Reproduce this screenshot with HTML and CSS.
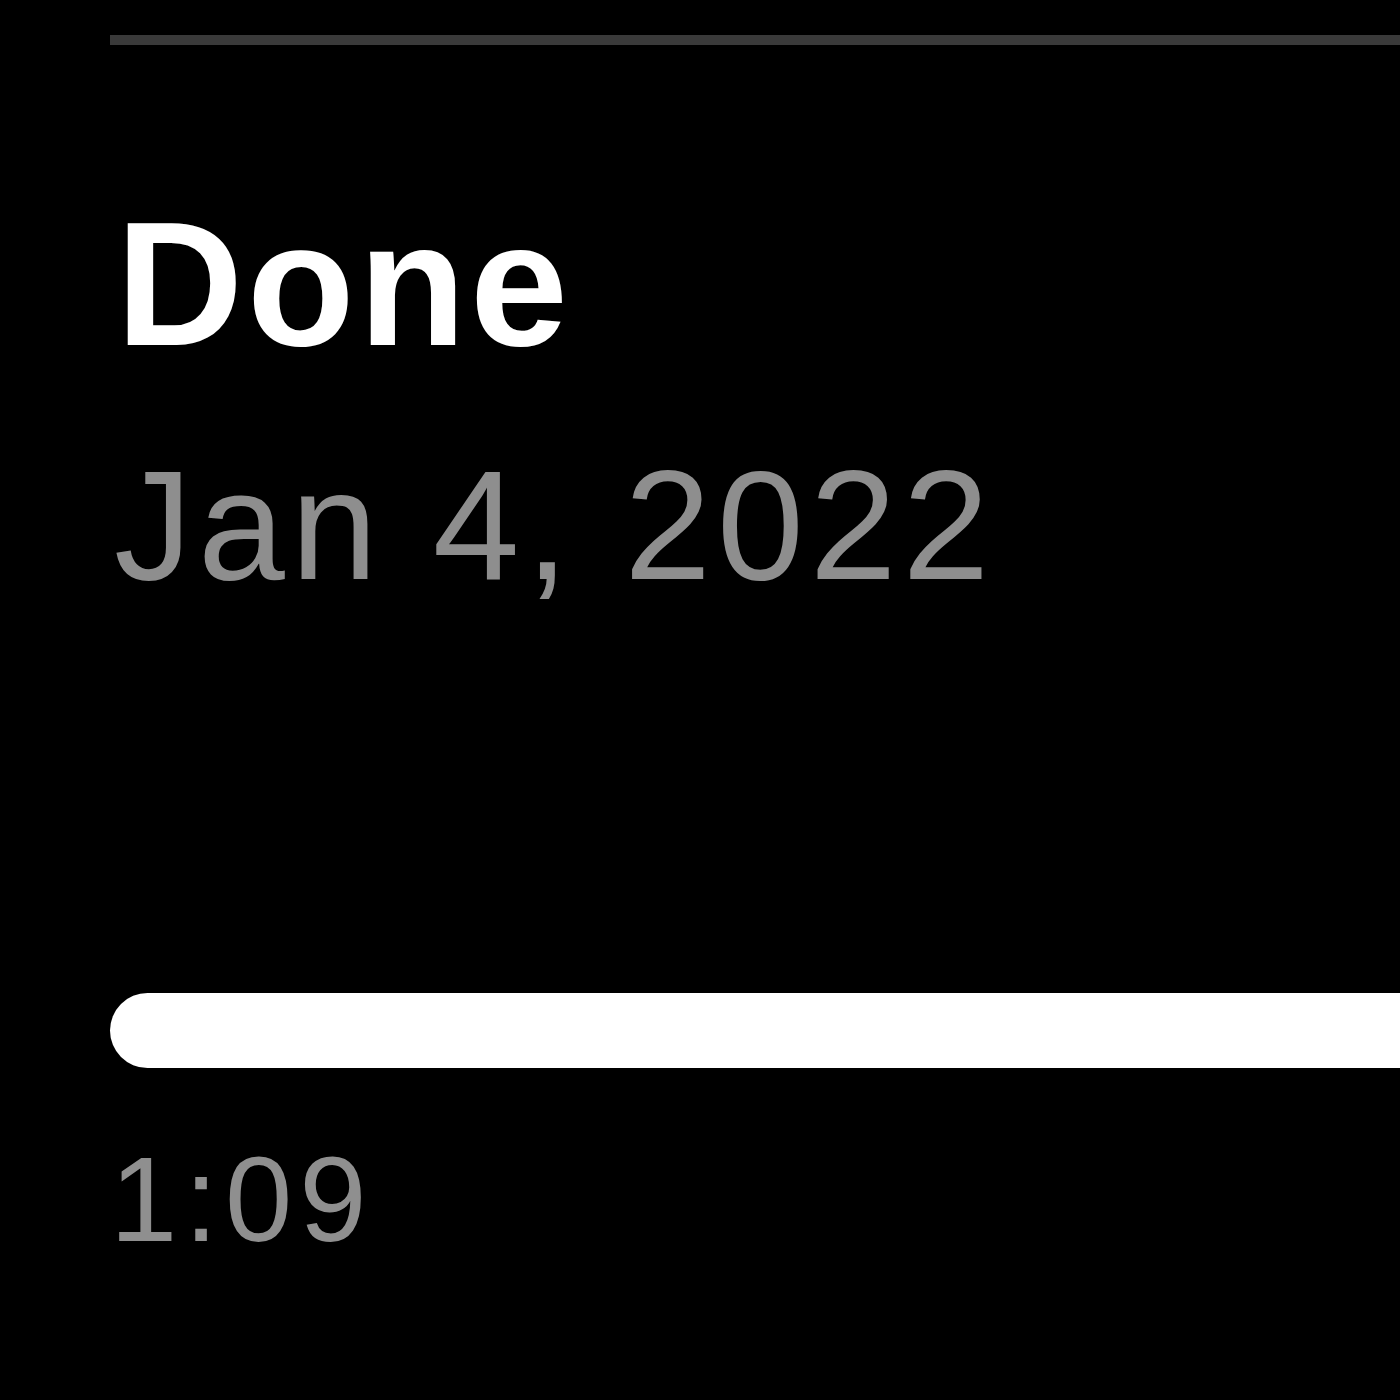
FILE: index.html
```html
<!DOCTYPE html>
<html>
<head>
<meta charset="utf-8">
<link rel="stylesheet" href="styles.css">
</head>
<body>
<div class="screen">
  <div class="divider"></div>
  <div class="title">Done</div>
  <div class="date">Jan 4, 2022</div>
  <div class="progress"></div>
  <div class="time">1:09</div>
</div>
</body>
</html>
```
FILE: styles.css
```css
html, body {
  margin: 0;
  padding: 0;
  background: #000;
}
.screen {
  width: 1400px;
  height: 1400px;
  box-sizing: border-box;
  padding: 35px 0 0 110px;
  overflow: hidden;
  font-family: "Liberation Sans", Arial, sans-serif;
  display: flex;
  flex-direction: column;
}
.divider {
  height: 10px;
  background: #3a3a3a;
}
.title {
  margin-top: 151px;
  margin-left: 6px;
  font-size: 176px;
  line-height: 176px;
  font-weight: 700;
  color: #fff;
  letter-spacing: 4px;
}
.date {
  margin-top: 75px;
  margin-left: 4px;
  font-size: 156px;
  line-height: 156px;
  color: #8e8e8e;
  letter-spacing: 6px;
}
.progress {
  margin-top: 390px;
  height: 75px;
  background: #fff;
  border-radius: 38px 0 0 38px;
}
.time {
  margin-top: 71px;
  margin-left: 0;
  font-size: 121px;
  line-height: 121px;
  color: #8f8f8f;
  letter-spacing: 7px;
}
```
